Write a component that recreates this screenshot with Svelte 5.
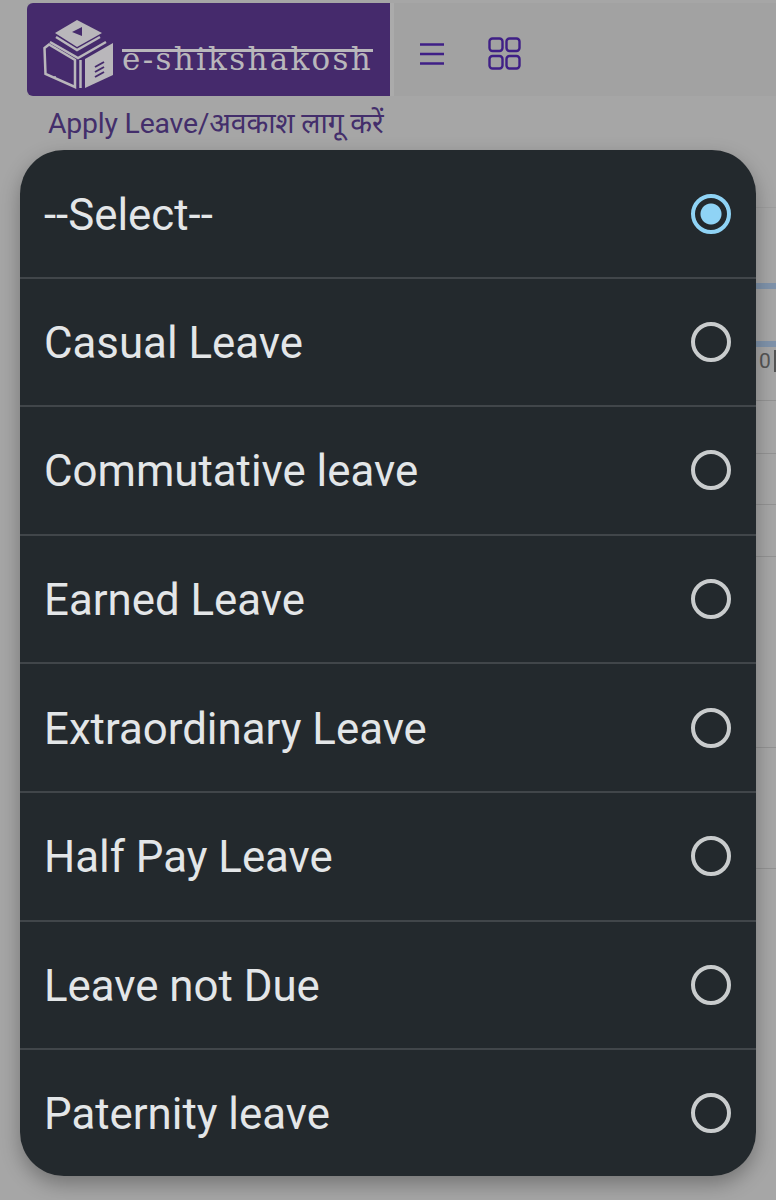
<script>
  const options = [
    "--Select--",
    "Casual Leave",
    "Commutative leave",
    "Earned Leave",
    "Extraordinary Leave",
    "Half Pay Leave",
    "Leave not Due",
    "Paternity leave"
  ];
  let selected = "--Select--";
</script>

<div class="page">
  <header class="topbar">
    <div class="brand">
      <svg class="logo" width="72" height="72" viewBox="43 18 72 72">
        <path class="cream" d="M77 20 L102 33 L77 47 L55 33 Z" />
        <path class="dark" d="M72 32 L82 27 L82 36 Z" />
        <path class="line" d="M56 37 L77 50 L100 37" />
        <path class="line" d="M50 42 L78 58 L106 42" />
        <path class="line" d="M44.5 48 L49 44.5 L75 60 L75 87 L45.5 74 Z" />
        <circle class="cream" cx="55" cy="77" r="1" />
        <path class="line" d="M80.5 60 L80.5 88" />
        <path class="cream" d="M85 59 L113 43 L113 75 L85 88 Z" />
        <path class="darkline" d="M95 67 L104 62 M95 72 L104 67 M95 77 L104 72" />
      </svg>
      <span class="wordmark">e-shikshakosh</span>
    </div>
    <button class="iconbtn" aria-label="Menu">
      <svg width="26" height="22" viewBox="0 0 26 22">
        <path d="M1 1.5 H25 M1 11 H25 M1 20.5 H25" />
      </svg>
    </button>
    <button class="iconbtn" aria-label="Apps">
      <svg width="33" height="33" viewBox="0 0 33 33">
        <rect x="1.5" y="1.5" width="13" height="12.5" rx="3" />
        <rect x="18.5" y="1.5" width="13" height="12.5" rx="3" />
        <rect x="1.5" y="19" width="13" height="12.5" rx="3" />
        <rect x="18.5" y="19" width="13" height="12.5" rx="3" />
      </svg>
    </button>
  </header>

  <h1 class="title">Apply Leave/अवकाश लागू करें</h1>

  <div class="backdrop-card">
    <div class="rule r1"></div>
    <div class="blue first"></div>
    <div class="blue second"></div>
    <div class="cell">0</div>
    <div class="rule r2"></div>
    <div class="rule r3"></div>
    <div class="rule r4"></div>
    <div class="rule r5"></div>
    <div class="rule r6"></div>
    <div class="rule r7"></div>
  </div>

  <div class="dialog" role="radiogroup">
    {#each options as option}
      <label class="option">
        <span class="name">{option}</span>
        <input type="radio" name="leave" value={option} bind:group={selected} />
        <i class="radio"></i>
      </label>
    {/each}
  </div>
</div>

<style>
  :global(body) {
    background: #a6a6a6;
  }
  .page {
    position: relative;
    height: 1200px;
    overflow: hidden;
    background: #a6a6a6;
    font-family: Roboto, "Noto Sans", sans-serif;
  }
  .topbar {
    display: flex;
    align-items: center;
    height: 93px;
    margin: 3px 0 0 27px;
    background: #a2a2a2;
  }
  .brand {
    display: flex;
    align-items: center;
    width: 363px;
    height: 100%;
    flex: none;
    box-sizing: border-box;
    padding-left: 16px;
    background: #452a6c;
    border-radius: 6px 0 0 6px;
    box-shadow: 4px 0 0 #ababab;
  }
  .logo {
    flex: none;
    margin: 9px 7px 0 0;
  }
  .cream {
    fill: #b9b7bb;
  }
  .dark {
    fill: #452a6c;
  }
  .line {
    fill: none;
    stroke: #b9b7bb;
    stroke-width: 2.5;
  }
  .darkline {
    fill: none;
    stroke: #452a6c;
    stroke-width: 2;
  }
  .wordmark {
    position: relative;
    margin-top: 18px;
    font-family: "DejaVu Serif", serif;
    font-size: 31px;
    line-height: 36px;
    letter-spacing: 2.3px;
    color: #b9b7bb;
    white-space: nowrap;
  }
  .wordmark::before {
    content: "";
    position: absolute;
    left: 0;
    right: 0;
    top: 8px;
    height: 3px;
    background: #b9b7bb;
  }
  .iconbtn {
    display: flex;
    align-items: center;
    padding: 0;
    border: 0;
    margin-top: 8px;
    background: none;
  }
  .iconbtn:first-of-type {
    margin-left: 29px;
  }
  .iconbtn + .iconbtn {
    margin-left: 43px;
  }
  .iconbtn svg {
    fill: none;
    stroke: #3f1f86;
    stroke-width: 2.4;
  }
  .title {
    margin: 12px 0 0 48px;
    font-size: 28.4px;
    line-height: 32px;
    font-weight: 400;
    color: #432e6b;
    white-space: nowrap;
    font-family: Roboto, "Noto Sans", sans-serif;
    letter-spacing: -0.2px;
  }
  .backdrop-card {
    position: absolute;
    inset: 0;
  }
  .blue {
    position: absolute;
    left: 756px;
    right: 0;
    height: 6px;
    background: #7f93ab;
  }
  .first {
    top: 283px;
  }
  .second {
    top: 341px;
  }
  .cell {
    position: absolute;
    left: 759px;
    top: 350px;
    width: 15px;
    font-size: 21px;
    line-height: 22px;
    color: #555;
    border-right: 2px solid #555;
  }
  .rule {
    position: absolute;
    left: 756px;
    right: 0;
    height: 1px;
    background: #939393;
  }
  .r1 {
    top: 207px;
    background: #9d9d9d;
  }
  .r2 {
    top: 400px;
  }
  .r3 {
    top: 453px;
  }
  .r4 {
    top: 504px;
  }
  .r5 {
    top: 556px;
  }
  .r6 {
    top: 747px;
  }
  .r7 {
    top: 868px;
  }
  .dialog {
    position: absolute;
    left: 20px;
    top: 150px;
    width: 736px;
    display: flex;
    flex-direction: column;
    background: #23292d;
    border-radius: 44px;
    overflow: hidden;
    box-shadow: 0 8px 20px rgba(0, 0, 0, 0.3);
  }
  .option {
    position: relative;
    display: flex;
    align-items: center;
    justify-content: space-between;
    box-sizing: border-box;
    height: 128.6px;
    padding: 0 25px 0 24px;
    color: #e3e6e8;
    font-size: 43.8px;
    border-bottom: 2px solid #41464a;
  }
  .option:first-child {
    padding-top: 1px;
  }
  .option:last-child {
    height: 125.8px;
    border-bottom: 0;
  }
  .name {
    padding-top: 2px;
  }
  input {
    position: absolute;
    opacity: 0;
    pointer-events: none;
  }
  .radio {
    box-sizing: border-box;
    width: 40px;
    height: 40px;
    border: 4px solid #c9cccd;
    border-radius: 50%;
  }
  input:checked + .radio {
    border-color: #8fd3f5;
    background: radial-gradient(circle, #8fd3f5 0 10px, transparent 11px);
  }
</style>
